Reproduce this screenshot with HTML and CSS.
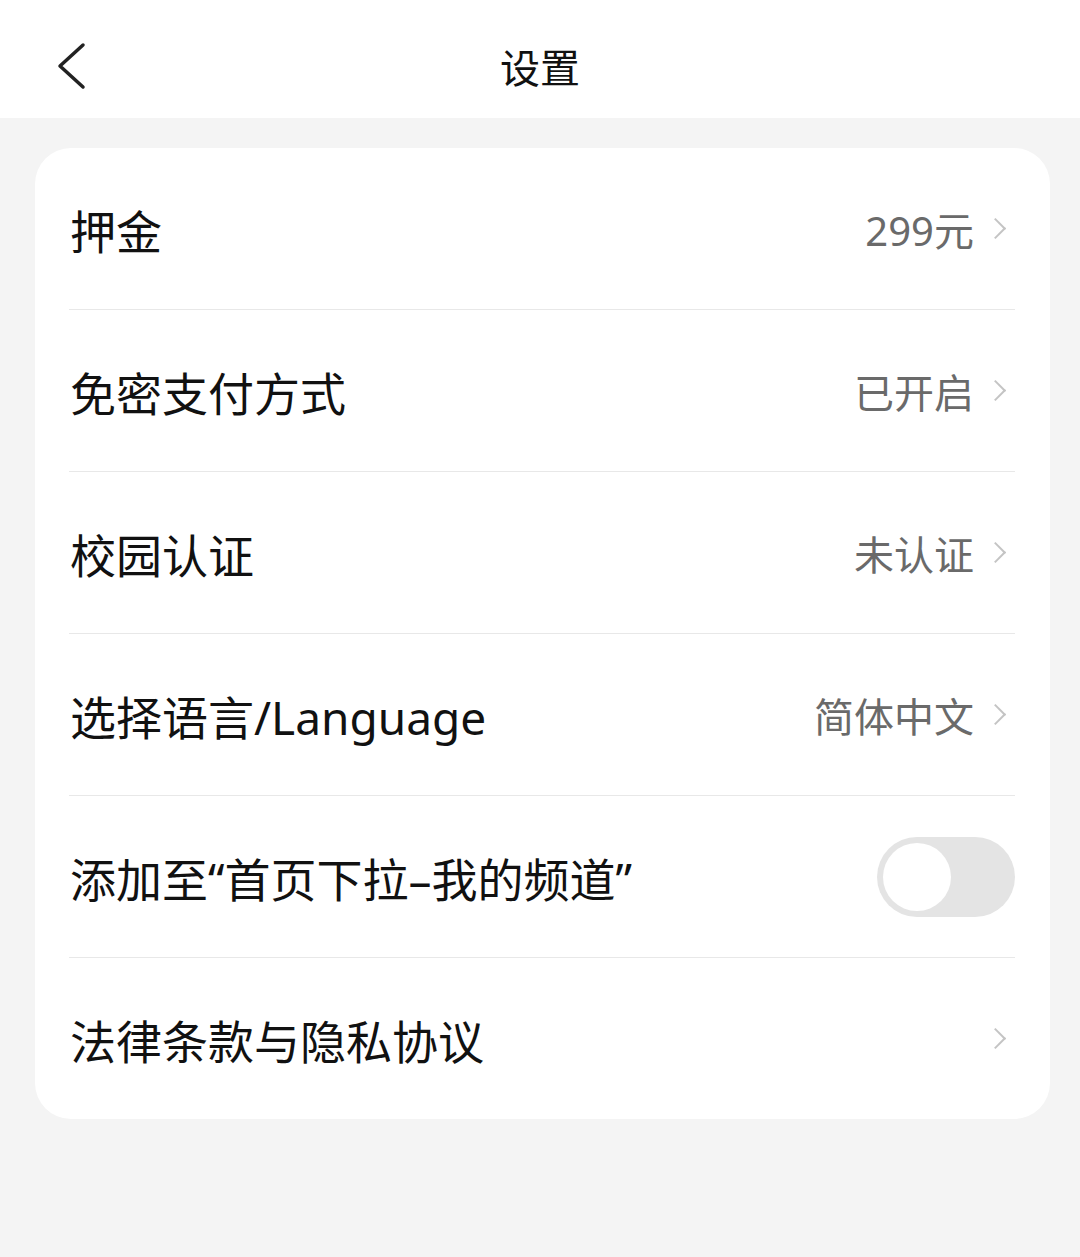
FILE: index.html
```html
<!DOCTYPE html>
<html lang="zh-CN">
<head>
    <meta charset="UTF-8">
    <meta name="viewport" content="width=device-width, initial-scale=1.0">
    <title>设置</title>
    <link rel="stylesheet" href="styles.css">
</head>
<body>
    <div class="topbar">
        <a class="back" href="#">
            <svg width="30" height="48" viewBox="0 0 30 48"><path d="M27 3 L4 24 L27 45" fill="none" stroke="#222" stroke-width="3.5" stroke-linecap="round" stroke-linejoin="round"/></svg>
        </a>
        <div class="title">设置</div>
    </div>

    <div class="card">
        <div class="row">
            <span class="label">押金</span>
            <span class="value">299元</span>
            <span class="arrow"></span>
        </div>
        <div class="row">
            <span class="label">免密支付方式</span>
            <span class="value">已开启</span>
            <span class="arrow"></span>
        </div>
        <div class="row">
            <span class="label">校园认证</span>
            <span class="value">未认证</span>
            <span class="arrow"></span>
        </div>
        <div class="row">
            <span class="label">选择语言/Language</span>
            <span class="value">简体中文</span>
            <span class="arrow"></span>
        </div>
        <div class="row">
            <span class="label">添加至“首页下拉–我的频道”</span>
            <span class="switch"><span class="knob"></span></span>
        </div>
        <div class="row">
            <span class="label">法律条款与隐私协议</span>
            <span class="arrow"></span>
        </div>
    </div>
</body>
</html>
```

FILE: styles.css
```css
body {
    margin: 0;
    background-color: #f4f4f4;
    font-family: "Noto Sans", "Noto Sans CJK SC", sans-serif;
    color: #111;
}
.topbar {
    position: relative;
    height: 118px;
    background-color: #fff;
    display: flex;
    align-items: center;
    justify-content: center;
}
.back {
    position: absolute;
    left: 56px;
    top: 42px;
    display: block;
    line-height: 0;
}
.title {
    font-size: 40px;
    color: #111;
    padding-top: 14px;
}
.card {
    margin: 30px 30px 0 35px;
    background-color: #fff;
    border-radius: 36px;
    padding: 0 35px 0 34px;
}
.row {
    height: 161px;
    display: flex;
    align-items: center;
    border-bottom: 1px solid #e8e8e8;
}
.row:last-child {
    border-bottom: none;
}
.label {
    flex: 1;
    font-size: 46px;
    color: #111;
    padding-left: 1px;
}
.value {
    font-size: 40px;
    color: #6a6a6a;
    margin-right: 14px;
}
.arrow {
    width: 13px;
    height: 13px;
    border-top: 2.5px solid #c4c4c4;
    border-right: 2.5px solid #c4c4c4;
    transform: rotate(45deg);
    margin-right: 12px;
}
.switch {
    width: 138px;
    height: 80px;
    border-radius: 40px;
    background-color: #e4e4e4;
    display: flex;
    align-items: center;
    padding-left: 6px;
    box-sizing: border-box;
}
.knob {
    width: 68px;
    height: 68px;
    border-radius: 50%;
    background-color: #fff;
}
```
